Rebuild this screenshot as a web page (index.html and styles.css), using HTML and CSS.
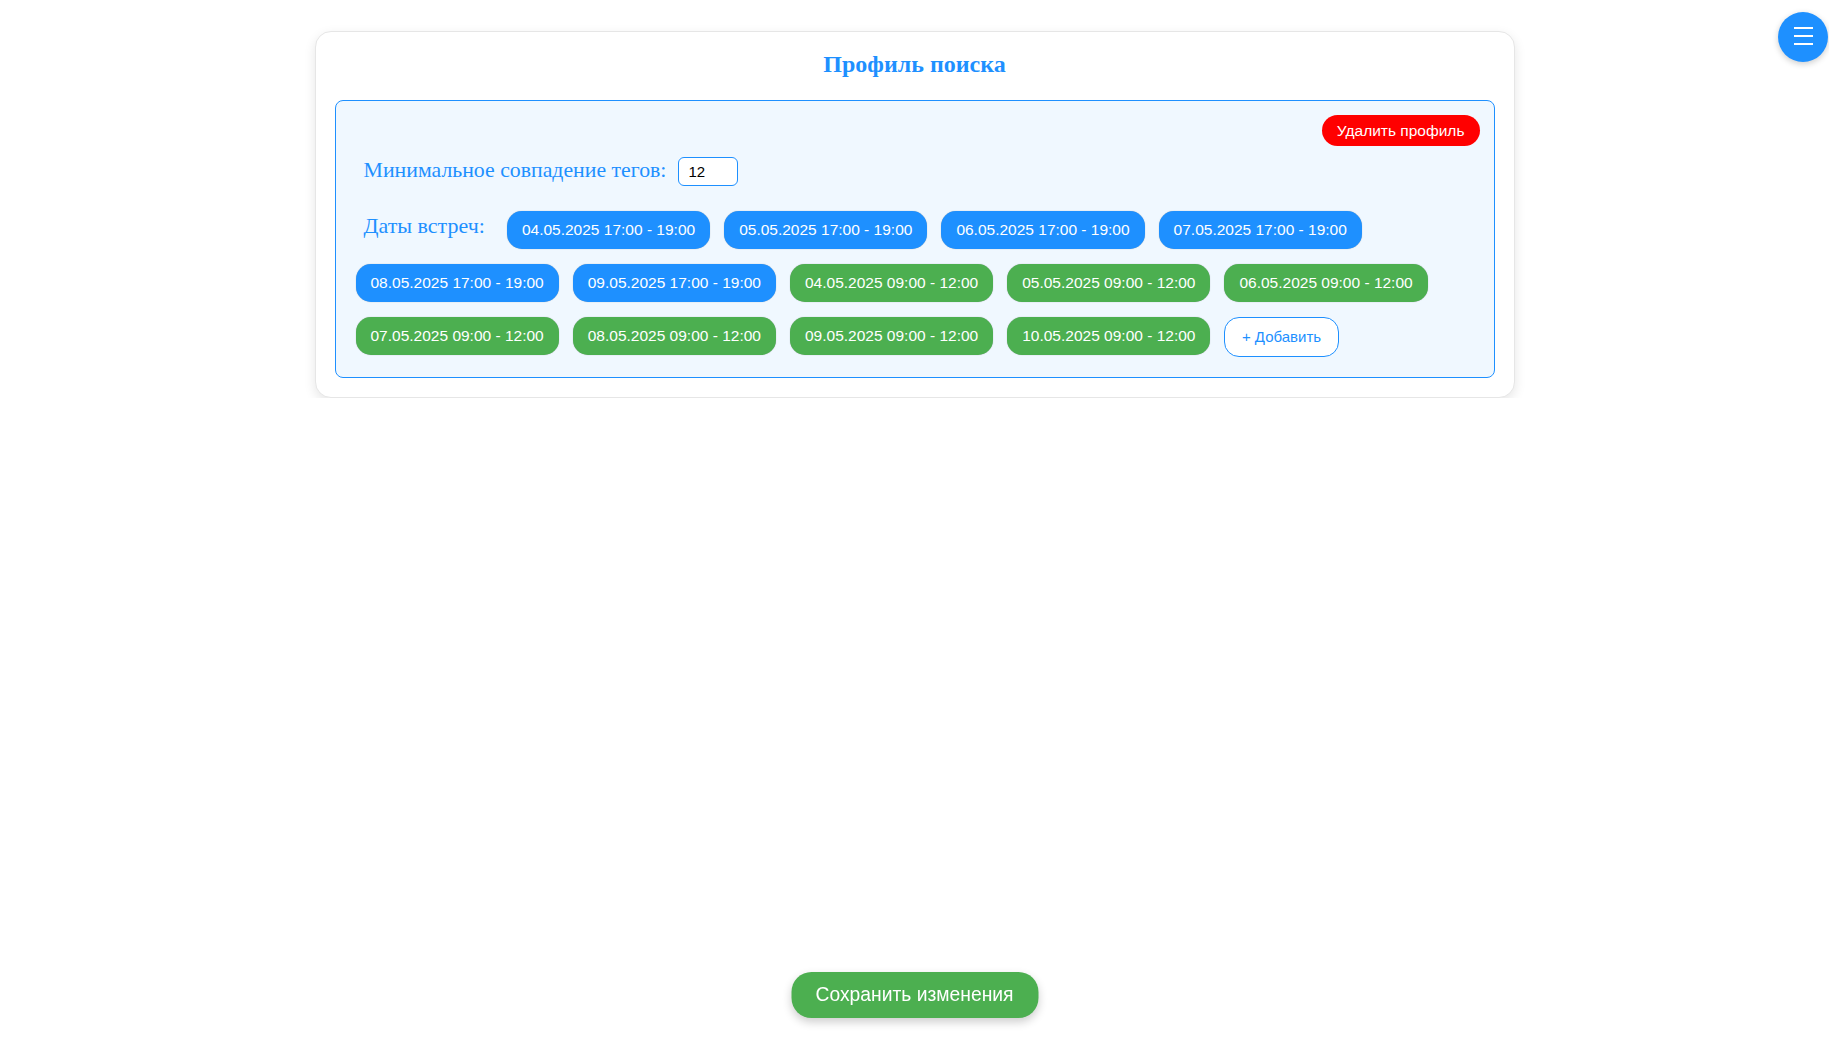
FILE: index.html
```html
<!DOCTYPE html>
<html lang="ru">
<head>
<meta charset="utf-8">
<title>Профиль поиска</title>
<link rel="stylesheet" href="styles.css">
</head>
<body>
<div class="card">
  <h2 class="title">Профиль поиска</h2>
  <div class="profile">
    <div class="profile-head">
      <button class="btn-delete">Удалить профиль</button>
    </div>
    <div class="tags-row">
      <label class="field-label tags-label" for="minTags">Минимальное совпадение тегов:</label>
      <input class="num-input" id="minTags" type="text" value="12">
    </div>
    <div class="dates">
      <span class="field-label dates-label">Даты встреч:</span>
      <button class="chip chip-blue">04.05.2025 17:00 - 19:00</button>
      <button class="chip chip-blue">05.05.2025 17:00 - 19:00</button>
      <button class="chip chip-blue">06.05.2025 17:00 - 19:00</button>
      <button class="chip chip-blue">07.05.2025 17:00 - 19:00</button>
      <button class="chip chip-blue">08.05.2025 17:00 - 19:00</button>
      <button class="chip chip-blue">09.05.2025 17:00 - 19:00</button>
      <button class="chip chip-green">04.05.2025 09:00 - 12:00</button>
      <button class="chip chip-green">05.05.2025 09:00 - 12:00</button>
      <button class="chip chip-green">06.05.2025 09:00 - 12:00</button>
      <button class="chip chip-green">07.05.2025 09:00 - 12:00</button>
      <button class="chip chip-green">08.05.2025 09:00 - 12:00</button>
      <button class="chip chip-green">09.05.2025 09:00 - 12:00</button>
      <button class="chip chip-green">10.05.2025 09:00 - 12:00</button>
      <button class="chip-add">+ Добавить</button>
    </div>
  </div>
</div>

<button class="btn-save">Сохранить изменения</button>

<button class="menu-btn" aria-label="Меню">
  <svg width="19" height="18" viewBox="0 0 19 18" aria-hidden="true">
    <rect x="0" y="0" width="19" height="2" fill="#fff"/>
    <rect x="0" y="8" width="19" height="2" fill="#fff"/>
    <rect x="0" y="16" width="19" height="2" fill="#fff"/>
  </svg>
</button>
</body>
</html>
```

FILE: styles.css
```css
html, body {
  margin: 0;
  padding: 0;
  background: #ffffff;
}

body {
  font-family: "Liberation Serif", "Times New Roman", serif;
}

.card {
  box-sizing: border-box;
  width: 1200px;
  margin: 31px auto 0;
  padding: 19px;
  background: #ffffff;
  border: 1px solid #e6e6e6;
  border-radius: 16px;
  box-shadow: 0 4px 12px rgba(0, 0, 0, 0.1);
}

.title {
  margin: 0 0 22px;
  font-family: "Liberation Serif", "Times New Roman", serif;
  font-size: 24px;
  font-weight: bold;
  color: #1e90ff;
  text-align: center;
}

.profile {
  background: #f0f8ff;
  border: 1px solid #1e90ff;
  border-radius: 8px;
  padding: 14px 14px 20px 20px;
}

.profile-head {
  display: flex;
  justify-content: flex-end;
}

.btn-delete {
  font-family: "Liberation Sans", Arial, sans-serif;
  font-size: 15.5px;
  line-height: 17px;
  color: #ffffff;
  background: #ff0000;
  border: none;
  border-radius: 16px;
  padding: 7px 15px;
  cursor: pointer;
}

.tags-row {
  display: flex;
  align-items: baseline;
  margin-top: 11px;
}

.field-label {
  font-family: "Liberation Serif", "Times New Roman", serif;
  font-size: 22px;
  color: #1e90ff;
  margin-left: 8px;
  margin-right: 13px;
}

.tags-label {
  font-size: 21.8px;
  margin-right: 12px;
}

.num-input {
  box-sizing: border-box;
  width: 60px;
  height: 29px;
  padding: 0 9px;
  border: 1px solid #1e90ff;
  border-radius: 6px;
  background: #ffffff;
  font-family: "Liberation Sans", Arial, sans-serif;
  font-size: 15px;
  color: #000000;
  outline: none;
}

.dates {
  display: flex;
  flex-wrap: wrap;
  align-items: flex-start;
  gap: 15px 14px;
  margin-top: 25px;
}

.dates-label {
  margin-top: 2px;
  margin-right: 8px;
}

.chip {
  font-family: "Liberation Sans", Arial, sans-serif;
  font-size: 15.5px;
  line-height: 18px;
  color: #ffffff;
  border: none;
  border-radius: 15px;
  padding: 10px 15px;
  box-shadow: 0 0 1px rgba(0, 0, 0, 0.35);
  cursor: pointer;
}

.chip-blue {
  background: #1e90ff;
}

.chip-green {
  background: #4caf50;
}

.chip-add {
  font-family: "Liberation Sans", Arial, sans-serif;
  font-size: 15px;
  line-height: 18px;
  color: #1e90ff;
  background: #ffffff;
  border: 1px solid #1e90ff;
  border-radius: 15px;
  padding: 10px 16.5px;
  cursor: pointer;
}

.btn-save {
  position: fixed;
  left: 50%;
  bottom: 20px;
  transform: translateX(-50%);
  font-family: "Liberation Sans", Arial, sans-serif;
  font-size: 19.3px;
  line-height: 22px;
  color: #ffffff;
  background: #4caf50;
  border: none;
  border-radius: 20px;
  padding: 12px 24.5px;
  box-shadow: 0 4px 10px rgba(0, 0, 0, 0.2);
  cursor: pointer;
}

.menu-btn {
  position: fixed;
  top: 12px;
  right: 1px;
  width: 50px;
  height: 50px;
  padding: 0 0 3px;
  border: none;
  border-radius: 50%;
  background: #1e90ff;
  box-shadow: 0 2px 6px rgba(0, 0, 0, 0.2);
  display: flex;
  align-items: center;
  justify-content: center;
  cursor: pointer;
}
```
